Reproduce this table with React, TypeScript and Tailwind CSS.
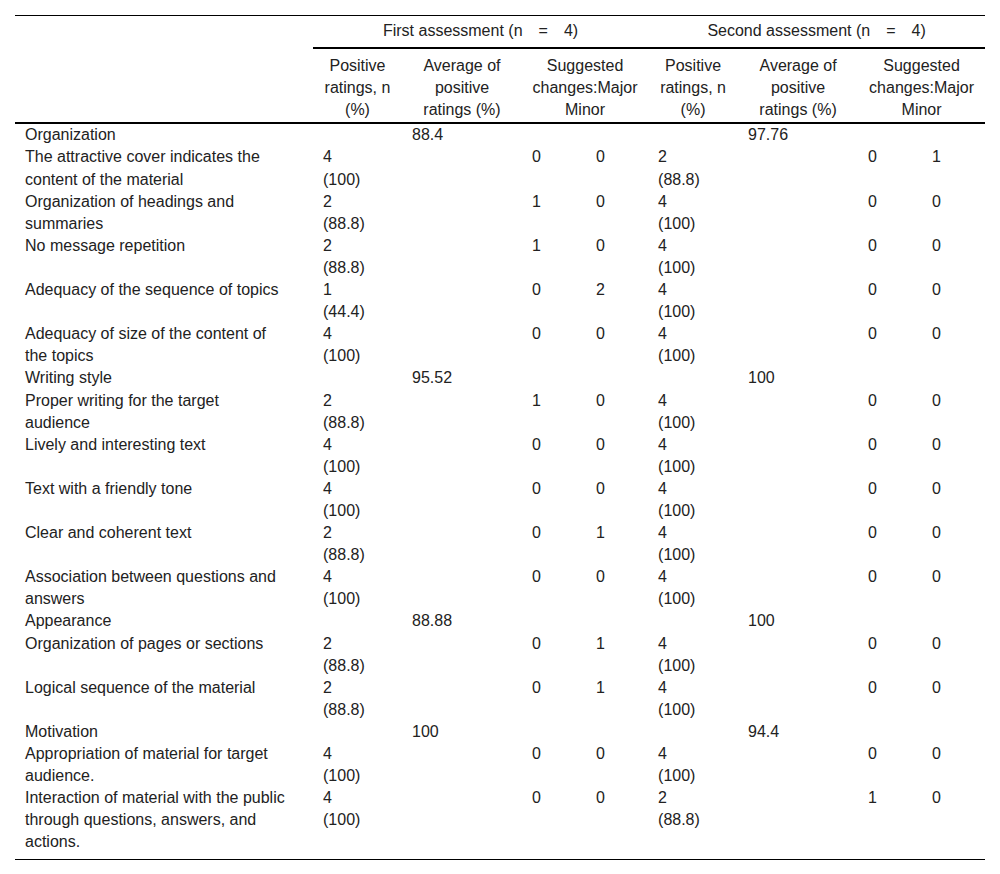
import React from "react";

type Item = {
  label: string;
  a: [string, string, string, string];
  b: [string, string, string, string];
};

type Section = {
  title: string;
  avg1: string;
  avg2: string;
  items: Item[];
};

const sections: Section[] = [
  {
    title: "Organization",
    avg1: "88.4",
    avg2: "97.76",
    items: [
      { label: "The attractive cover indicates the content of the material", a: ["4", "(100)", "0", "0"], b: ["2", "(88.8)", "0", "1"] },
      { label: "Organization of headings and summaries", a: ["2", "(88.8)", "1", "0"], b: ["4", "(100)", "0", "0"] },
      { label: "No message repetition", a: ["2", "(88.8)", "1", "0"], b: ["4", "(100)", "0", "0"] },
      { label: "Adequacy of the sequence of topics", a: ["1", "(44.4)", "0", "2"], b: ["4", "(100)", "0", "0"] },
      { label: "Adequacy of size of the content of the topics", a: ["4", "(100)", "0", "0"], b: ["4", "(100)", "0", "0"] },
    ],
  },
  {
    title: "Writing style",
    avg1: "95.52",
    avg2: "100",
    items: [
      { label: "Proper writing for the target audience", a: ["2", "(88.8)", "1", "0"], b: ["4", "(100)", "0", "0"] },
      { label: "Lively and interesting text", a: ["4", "(100)", "0", "0"], b: ["4", "(100)", "0", "0"] },
      { label: "Text with a friendly tone", a: ["4", "(100)", "0", "0"], b: ["4", "(100)", "0", "0"] },
      { label: "Clear and coherent text", a: ["2", "(88.8)", "0", "1"], b: ["4", "(100)", "0", "0"] },
      { label: "Association between questions and answers", a: ["4", "(100)", "0", "0"], b: ["4", "(100)", "0", "0"] },
    ],
  },
  {
    title: "Appearance",
    avg1: "88.88",
    avg2: "100",
    items: [
      { label: "Organization of pages or sections", a: ["2", "(88.8)", "0", "1"], b: ["4", "(100)", "0", "0"] },
      { label: "Logical sequence of the material", a: ["2", "(88.8)", "0", "1"], b: ["4", "(100)", "0", "0"] },
    ],
  },
  {
    title: "Motivation",
    avg1: "100",
    avg2: "94.4",
    items: [
      { label: "Appropriation of material for target audience.", a: ["4", "(100)", "0", "0"], b: ["4", "(100)", "0", "0"] },
      { label: "Interaction of material with the public through questions, answers, and actions.", a: ["4", "(100)", "0", "0"], b: ["2", "(88.8)", "1", "0"] },
    ],
  },
];

const td = "px-[10px] align-top text-left";

const ItemCells = ({ v, last }: { v: Item["a"]; last: boolean }) => (
  <>
    <td className={`${td} ${last ? "pb-[6px]" : ""}`}>
      {v[0]}
      <br />
      {v[1]}
    </td>
    <td className={td} />
    <td className={td}>{v[2]}</td>
    <td className={td}>{v[3]}</td>
  </>
);

export default function App() {
  return (
    <div
      className="w-[1000px] min-h-[874px] bg-white text-[#222] text-[16px] leading-[22.1px]"
      style={{ fontFamily: '"Liberation Sans", Arial, sans-serif' }}
    >
      <div className="pt-[15px] px-[15px]">
        <table className="w-[970px] table-fixed border-collapse border-t border-b border-black">
          <colgroup>
            <col className="w-[298px]" />
            <col className="w-[89px]" />
            <col className="w-[120px]" />
            <col className="w-[64px]" />
            <col className="w-[62px]" />
            <col className="w-[90px]" />
            <col className="w-[120px]" />
            <col className="w-[64px]" />
            <col className="w-[63px]" />
          </colgroup>
          <thead>
            <tr>
              <th className="font-normal" />
              <th
                colSpan={4}
                className="font-normal text-center pt-[4px] pb-[5px] border-b-2 border-black"
              >
                First assessment (n{"\u2003"}={"\u2003"}4)
              </th>
              <th
                colSpan={4}
                className="font-normal text-center pt-[4px] pb-[5px] border-b-2 border-black"
              >
                Second assessment (n{"\u2003"}={"\u2003"}4)
              </th>
            </tr>
            <tr className="border-b-2 border-black">
              <th className="font-normal" />
              <th className="font-normal text-center align-top px-[2px] pt-[6px] pb-[1px]">
                Positive
                <br />
                ratings, n
                <br />
                (%)
              </th>
              <th className="font-normal text-center align-top px-[2px] pt-[6px] pb-[1px]">
                Average of
                <br />
                positive
                <br />
                ratings (%)
              </th>
              <th colSpan={2} className="font-normal text-center align-top px-[2px] pt-[6px] pb-[1px]">
                Suggested
                <br />
                changes:Major
                <br />
                Minor
              </th>
              <th className="font-normal text-center align-top px-[2px] pt-[6px] pb-[1px]">
                Positive
                <br />
                ratings, n
                <br />
                (%)
              </th>
              <th className="font-normal text-center align-top px-[2px] pt-[6px] pb-[1px]">
                Average of
                <br />
                positive
                <br />
                ratings (%)
              </th>
              <th colSpan={2} className="font-normal text-center align-top px-[2px] pt-[6px] pb-[1px]">
                Suggested
                <br />
                changes:Major
                <br />
                Minor
              </th>
            </tr>
          </thead>
          <tbody>
            {sections.map((s, si) => (
              <React.Fragment key={s.title}>
                <tr>
                  <td className={td}>{s.title}</td>
                  <td className={td} />
                  <td className={td}>{s.avg1}</td>
                  <td className={td} />
                  <td className={td} />
                  <td className={td} />
                  <td className={td}>{s.avg2}</td>
                  <td className={td} />
                  <td className={td} />
                </tr>
                {s.items.map((it, ii) => {
                  const last = si === sections.length - 1 && ii === s.items.length - 1;
                  return (
                    <tr key={it.label}>
                      <td className={`pl-[10px] pr-[27px] align-top text-left ${last ? "pb-[6px]" : ""}`}>
                        {it.label}
                      </td>
                      <ItemCells v={it.a} last={last} />
                      <ItemCells v={it.b} last={last} />
                    </tr>
                  );
                })}
              </React.Fragment>
            ))}
          </tbody>
        </table>
      </div>
    </div>
  );
}
